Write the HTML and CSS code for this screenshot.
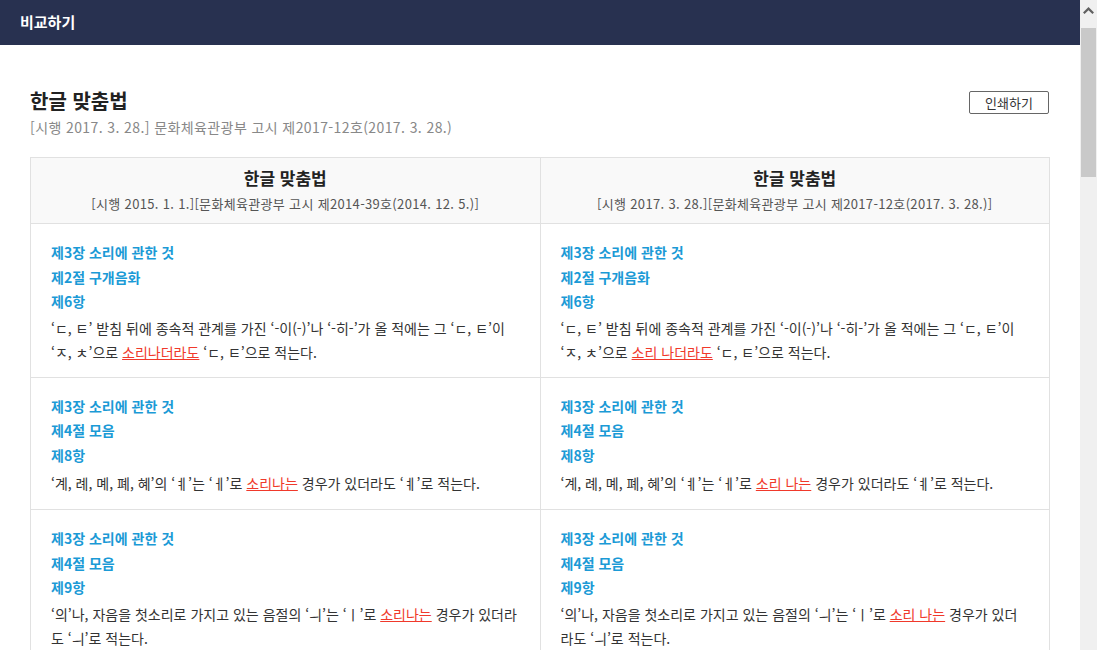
FILE: index.html
```html
<!DOCTYPE html>
<html lang="ko">
<head>
<meta charset="utf-8">
<title>비교하기</title>
<link rel="stylesheet" href="styles.css">
</head>
<body>
<div class="window">
  <div class="viewport">
    <header class="topbar">비교하기</header>
    <main class="page">
      <div class="doc-head">
        <div class="doc-title-wrap">
          <h1 class="doc-title">한글 맞춤법</h1>
          <p class="doc-sub">[시행 2017. 3. 28.] 문화체육관광부 고시 제2017-12호(2017. 3. 28.)</p>
        </div>
        <button class="print-btn" type="button">인쇄하기</button>
      </div>
      <table class="compare">
        <thead>
          <tr>
            <th><div class="col-title">한글 맞춤법</div><div class="col-sub">[시행 2015. 1. 1.][문화체육관광부 고시 제2014-39호(2014. 12. 5.)]</div></th>
            <th><div class="col-title">한글 맞춤법</div><div class="col-sub">[시행 2017. 3. 28.][문화체육관광부 고시 제2017-12호(2017. 3. 28.)]</div></th>
          </tr>
        </thead>
        <tbody>
          <tr>
            <td>
              <div class="h">제3장 소리에 관한 것</div>
              <div class="h">제2절 구개음화</div>
              <div class="h">제6항</div>
              <p class="txt">‘ㄷ, ㅌ’ 받침 뒤에 종속적 관계를 가진 ‘-이(-)’나 ‘-히-’가 올 적에는 그 ‘ㄷ, ㅌ’이<br>‘ㅈ, ㅊ’으로 <span class="chg">소리나더라도</span> ‘ㄷ, ㅌ’으로 적는다.</p>
            </td>
            <td>
              <div class="h">제3장 소리에 관한 것</div>
              <div class="h">제2절 구개음화</div>
              <div class="h">제6항</div>
              <p class="txt">‘ㄷ, ㅌ’ 받침 뒤에 종속적 관계를 가진 ‘-이(-)’나 ‘-히-’가 올 적에는 그 ‘ㄷ, ㅌ’이<br>‘ㅈ, ㅊ’으로 <span class="chg">소리 나더라도</span> ‘ㄷ, ㅌ’으로 적는다.</p>
            </td>
          </tr>
          <tr>
            <td>
              <div class="h">제3장 소리에 관한 것</div>
              <div class="h">제4절 모음</div>
              <div class="h">제8항</div>
              <p class="txt txt-loose">‘계, 례, 몌, 폐, 혜’의 ‘ㅖ’는 ‘ㅔ’로 <span class="chg">소리나는</span> 경우가 있더라도 ‘ㅖ’로 적는다.</p>
            </td>
            <td>
              <div class="h">제3장 소리에 관한 것</div>
              <div class="h">제4절 모음</div>
              <div class="h">제8항</div>
              <p class="txt txt-loose">‘계, 례, 몌, 폐, 혜’의 ‘ㅖ’는 ‘ㅔ’로 <span class="chg">소리 나는</span> 경우가 있더라도 ‘ㅖ’로 적는다.</p>
            </td>
          </tr>
          <tr>
            <td>
              <div class="h">제3장 소리에 관한 것</div>
              <div class="h">제4절 모음</div>
              <div class="h">제9항</div>
              <p class="txt">‘의’나, 자음을 첫소리로 가지고 있는 음절의 ‘ㅢ’는 ‘ㅣ’로 <span class="chg">소리나는</span> 경우가 있더라<br>도 ‘ㅢ’로 적는다.</p>
            </td>
            <td>
              <div class="h">제3장 소리에 관한 것</div>
              <div class="h">제4절 모음</div>
              <div class="h">제9항</div>
              <p class="txt">‘의’나, 자음을 첫소리로 가지고 있는 음절의 ‘ㅢ’는 ‘ㅣ’로 <span class="chg">소리 나는</span> 경우가 있더<br>라도 ‘ㅢ’로 적는다.</p>
            </td>
          </tr>
        </tbody>
      </table>
    </main>
  </div>
  <div class="scrollbar" aria-hidden="true">
    <div class="sb-arrow">
      <svg width="11" height="7" viewBox="0 0 11 7"><path d="M0.8 6.2 L5.5 1.6 L10.2 6.2" fill="none" stroke="#606060" stroke-width="2.2"/></svg>
    </div>
    <div class="sb-track"><div class="sb-thumb"></div></div>
  </div>
</div>
</body>
</html>
```
FILE: styles.css
```css
html, body {
  margin: 0;
  height: 100%;
  overflow: hidden;
}
body {
  font-family: "Noto Sans CJK KR", "Noto Sans", sans-serif;
  color: #333;
  background: #fff;
}
.window {
  display: flex;
  height: 100vh;
}
.viewport {
  flex: 1;
  min-width: 0;
  overflow: hidden;
}
.scrollbar {
  width: 17px;
  flex: none;
  background: #f0f0f0;
  display: flex;
  flex-direction: column;
}
.sb-arrow {
  height: 27px;
  display: flex;
  justify-content: center;
  align-items: center;
  padding-bottom: 6px;
  box-sizing: border-box;
}
.sb-arrow svg {
  display: block;
}
.sb-track {
  flex: 1;
  padding: 1px 1px 0 1px;
}
.sb-thumb {
  height: 149px;
  background: #c9c9c9;
}
.topbar {
  height: 45px;
  background: #283150;
  color: #fff;
  font-size: 15px;
  font-weight: 700;
  line-height: 43px;
  padding: 0 20px;
}
.page {
  padding: 43px 30px 0;
}
.doc-head {
  display: flex;
  justify-content: space-between;
  align-items: flex-start;
}
.doc-title {
  margin: 0;
  font-size: 20px;
  line-height: 26px;
  font-weight: 700;
  color: #222;
}
.doc-sub {
  margin: 0;
  font-size: 14px;
  line-height: 26px;
  letter-spacing: 0.4px;
  color: #888;
}
.print-btn {
  margin-top: 3px;
  margin-right: 1px;
  width: 80px;
  height: 23px;
  border: 1px solid #666;
  border-radius: 2px;
  background: #fff;
  font-family: inherit;
  font-size: 13px;
  color: #333;
  padding: 0;
  line-height: 20px;
}
.compare {
  margin-top: 17px;
  width: 100%;
  border-collapse: collapse;
  table-layout: fixed;
}
.compare th,
.compare td {
  border: 1px solid #e1e1e1;
  width: 50%;
}
.compare th {
  background: #f9f9f9;
  padding: 9px 0 8px;
  font-weight: 400;
}
.col-title {
  font-size: 17px;
  font-weight: 700;
  line-height: 22px;
  color: #222;
}
.col-sub {
  margin-top: 4px;
  font-size: 13px;
  line-height: 22px;
  letter-spacing: 0.33px;
  color: #555;
}
.compare td {
  vertical-align: top;
  padding: 16px 20px 13px;
}
.h {
  font-size: 14px;
  font-weight: 700;
  line-height: 24.5px;
  color: #1b9ad6;
}
.txt {
  margin: 2px 0 0;
  font-size: 14px;
  line-height: 24px;
  color: #333;
}
.txt-loose {
  margin-top: 4px;
  margin-bottom: 1px;
}
.chg {
  color: #f0392b;
  text-decoration: underline;
}
```
